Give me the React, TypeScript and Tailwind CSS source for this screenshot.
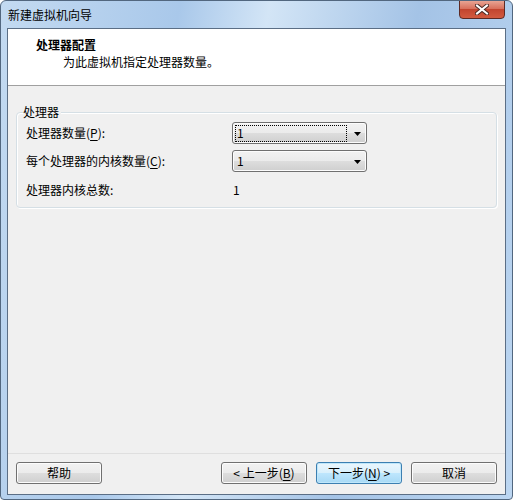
import React from 'react';

const font = { fontFamily: '"Noto Sans CJK SC", "Microsoft YaHei", sans-serif' };

function Combo({ focused }: { focused?: boolean }) {
  return (
    <div className="relative w-[135px] h-[22px] rounded-[3px] border border-[#707070] bg-[linear-gradient(#f2f2f2_0%,#ebebeb_50%,#dddddd_51%,#cfcfcf_100%)] shadow-[inset_0_0_0_1px_#fcfcfc] flex items-center">
      <div
        className={`ml-[2px] h-[17px] w-[112px] flex items-center pl-[1px] ${focused ? 'border border-dotted border-black' : 'border border-transparent'}`}
      >
        <span className="text-[12px] leading-none">1</span>
      </div>
      <svg className="absolute right-[5px] top-[9px]" width="7" height="4" viewBox="0 0 7 4">
        <path d="M0 0H7L3.5 4Z" fill="#000" />
      </svg>
    </div>
  );
}

function Btn({ children, primary }: { children: React.ReactNode; primary?: boolean }) {
  return (
    <button
      className={`w-[86px] h-[22px] rounded-[3px] border text-[12px] leading-none flex items-center justify-center ${
        primary
          ? 'border-[#3c7fb1] bg-[linear-gradient(#eaf6fd_0%,#d9f0fc_50%,#bee6fd_51%,#a7d9f5_100%)] shadow-[inset_0_0_0_1px_#bfe7fb]'
          : 'border-[#707070] bg-[linear-gradient(#f2f2f2_0%,#ebebeb_50%,#dddddd_51%,#cfcfcf_100%)] shadow-[inset_0_0_0_1px_#fcfcfc]'
      }`}
    >
      {children}
    </button>
  );
}

export default function App() {
  return (
    <div
      className="w-[513px] h-[500px] overflow-hidden rounded-t-[6px] rounded-b-[4px] border border-[#52677f] bg-[linear-gradient(100deg,#c3daf1_0%,#a9c8ea_30%,#d3e5f6_45%,#a4c3e6_70%,#bcd6f1_100%)] flex flex-col text-black"
      style={font}
    >
      {/* Title bar */}
      <div className="h-[27px] shrink-0 flex items-start pl-[7px] pr-[7px]">
        <span className="mt-[6px] text-[12px] leading-[16px] text-black">新建虚拟机向导</span>
        <div className="ml-auto w-[46px] h-[19px] -mt-px rounded-b-[4px] border border-[#5d2a25] bg-[linear-gradient(#e8a493_0%,#d8705c_45%,#c2452f_50%,#d25a40_100%)] flex items-center justify-center">
          <svg width="14" height="11" viewBox="0 0 14 11">
            <path
              d="M2 1.5L12 9.5M12 1.5L2 9.5"
              stroke="#4a2a25"
              strokeWidth="4"
              strokeLinecap="square"
            />
            <path d="M2 1.5L12 9.5M12 1.5L2 9.5" stroke="#fff" strokeWidth="2" strokeLinecap="square" />
          </svg>
        </div>
      </div>

      {/* Client area */}
      <div className="mx-[6px] mb-[4px] flex-1 flex flex-col border border-[#5b6e85] bg-[#f0f0f0]">
        {/* Header */}
        <div className="h-[57px] shrink-0 bg-white border-b border-[#a0a0a0] pl-[28px] pt-[8px]">
          <div className="text-[12px] leading-[16px] font-bold">处理器配置</div>
          <div className="pl-[27px] mt-[1px] text-[12px] leading-[16px]">为此虚拟机指定处理器数量。</div>
        </div>

        {/* Body */}
        <div className="flex-1 px-[8px] pt-[18px]">
          <div className="relative h-[96px] rounded-[4px] border border-[#d5dfe5] shadow-[inset_1px_1px_0_#fff,1px_1px_0_#fff] mt-[8px] pl-[9px] pt-[9px]">
            <span className="absolute left-[6px] -top-[9px] bg-[#f0f0f0] pr-[2px] text-[12px] leading-[16px]">处理器</span>
            <div className="flex items-center h-[22px]">
              <span className="w-[206px] text-[12px] leading-none">
                处理器数量(<span className="underline underline-offset-2">P</span>):
              </span>
              <Combo focused />
            </div>
            <div className="flex items-center h-[22px] mt-[6px]">
              <span className="w-[206px] text-[12px] leading-none">
                每个处理器的内核数量(<span className="underline underline-offset-2">C</span>):
              </span>
              <Combo />
            </div>
            <div className="flex items-center h-[16px] mt-[10px]">
              <span className="w-[207px] text-[12px] leading-none">处理器内核总数:</span>
              <span className="text-[12px] leading-none">1</span>
            </div>
          </div>
        </div>

        {/* Footer */}
        <div className="shrink-0 h-[41px] border-t border-[#dfdfdf] flex items-start pt-[8px] pl-[8px] pr-[8px]">
          <Btn>帮助</Btn>
          <div className="ml-auto flex gap-[9px]">
            <Btn>
              &lt; 上一步(<span className="underline underline-offset-2">B</span>)
            </Btn>
            <Btn primary>
              下一步(<span className="underline underline-offset-2">N</span>) &gt;
            </Btn>
            <Btn>取消</Btn>
          </div>
        </div>
      </div>
    </div>
  );
}
